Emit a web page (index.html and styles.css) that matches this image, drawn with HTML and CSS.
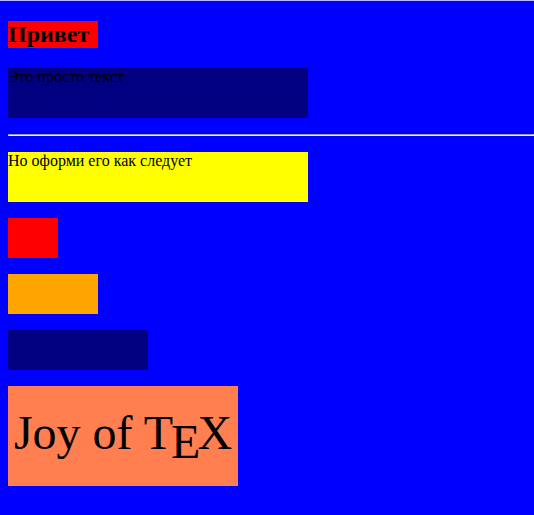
FILE: index.html
```
<!DOCTYPE html>
<html>
<head>
<meta charset="utf-8">
<link rel="stylesheet" href="styles.css">
</head>
<body>
<h1 class="title">Привет</h1>
<p class="plain">Это просто текст</p>
<hr class="rule">
<p class="styled">Но оформи его как следует</p>
<div class="box box-red"></div>
<div class="box box-orange"></div>
<div class="box box-navy"></div>
<div class="joy">Joy of T<span class="tex-e">E</span>X</div>
</body>
</html>
```
FILE: styles.css
```
html {
  background: #0000ff;
  border-top: 1px solid #b8b8ff;
}
body {
  margin: 0 0 8px 8px;
  font-family: "Liberation Serif", "Times New Roman", serif;
  font-size: 16px;
  color: #000;
}
.title {
  width: 90px;
  margin: 19.92px 0;
  font-size: 24px;
  font-weight: bold;
  background: #ff0000;
}
.plain {
  width: 300px;
  height: 50px;
  margin: 16px 0;
  background: #000080;
}
.rule {
  margin: 8px 0;
}
.styled {
  width: 300px;
  height: 50px;
  margin: 16px 0;
  background: #ffff00;
}
.box {
  height: 40px;
  margin: 16px 0;
}
.box-red { width: 50px; background: #ff0000; }
.box-orange { width: 90px; background: #ffa500; }
.box-navy { width: 140px; background: #000080; }
.joy {
  width: 230px;
  height: 100px;
  margin: 16px 0;
  background: #ff7f50;
  font-size: 48px;
  line-height: 94px;
  text-align: center;
  white-space: nowrap;
}
.tex-e {
  position: relative;
  top: 9px;
  margin-left: -2px;
  margin-right: -3px;
}
```
